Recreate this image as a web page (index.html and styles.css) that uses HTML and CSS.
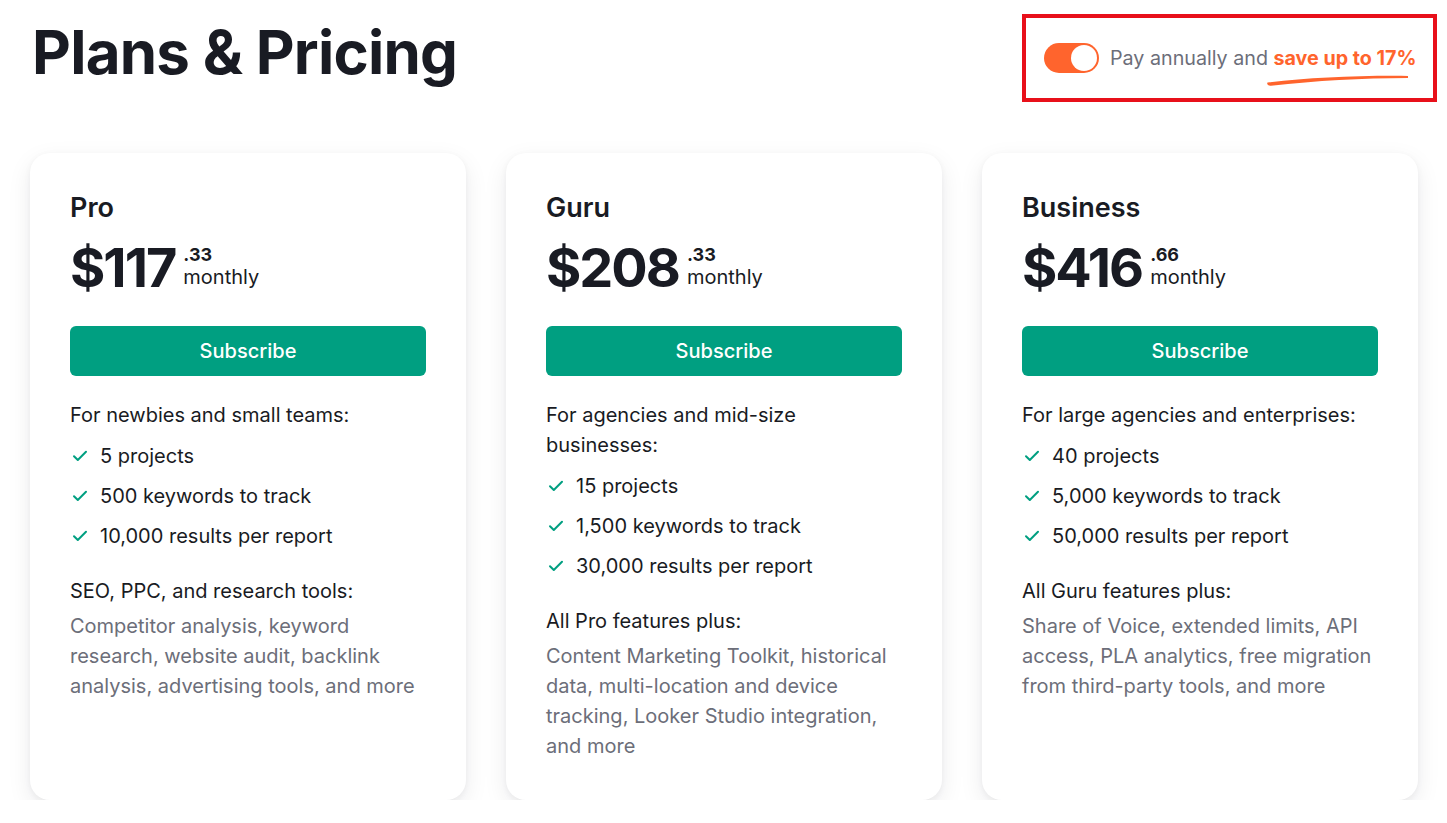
FILE: index.html
```html
<!DOCTYPE html>
<html lang="en">
<head>
<meta charset="utf-8">
<title>Plans &amp; Pricing</title>
<link rel="stylesheet" href="styles.css">
</head>
<body>
<header class="header">
  <h1 class="title">Plans &amp; Pricing</h1>
  <div class="billing">
    <span class="toggle"><span class="knob"></span></span>
    <span class="billing-text">Pay annually and <span class="save">save up to 17%<svg class="swoosh" viewBox="0 0 142 12" preserveAspectRatio="none" aria-hidden="true"><path d="M0.5 8.2 C 40 3.2, 90 0.4, 142 1 L 142 3.4 C 95 3.6, 50 6.4, 4 11.7 C 1 12, -0.5 10, 0.5 8.2 Z" fill="#ff642d"/></svg></span></span>
  </div>
</header>

<main class="plans">
  <section class="card">
    <h2 class="plan-name">Pro</h2>
    <div class="price"><span class="amount">$117</span><span class="price-side"><span class="cents">.33</span><span class="period">monthly</span></span></div>
    <button class="subscribe">Subscribe</button>
    <p class="intro">For newbies and small teams:</p>
    <ul class="limits">
      <li><svg class="check" viewBox="0 0 16 16"><path d="M2 8.2 L5.8 12 L14 3.8"/></svg>5 projects</li>
      <li><svg class="check" viewBox="0 0 16 16"><path d="M2 8.2 L5.8 12 L14 3.8"/></svg>500 keywords to track</li>
      <li><svg class="check" viewBox="0 0 16 16"><path d="M2 8.2 L5.8 12 L14 3.8"/></svg>10,000 results per report</li>
    </ul>
    <p class="feat-head">SEO, PPC, and research tools:</p>
    <p class="feat-desc">Competitor analysis, keyword research, website audit, backlink analysis, advertising tools, and more</p>
  </section>

  <section class="card">
    <h2 class="plan-name">Guru</h2>
    <div class="price"><span class="amount">$208</span><span class="price-side"><span class="cents">.33</span><span class="period">monthly</span></span></div>
    <button class="subscribe">Subscribe</button>
    <p class="intro">For agencies and mid-size businesses:</p>
    <ul class="limits">
      <li><svg class="check" viewBox="0 0 16 16"><path d="M2 8.2 L5.8 12 L14 3.8"/></svg>15 projects</li>
      <li><svg class="check" viewBox="0 0 16 16"><path d="M2 8.2 L5.8 12 L14 3.8"/></svg>1,500 keywords to track</li>
      <li><svg class="check" viewBox="0 0 16 16"><path d="M2 8.2 L5.8 12 L14 3.8"/></svg>30,000 results per report</li>
    </ul>
    <p class="feat-head">All Pro features plus:</p>
    <p class="feat-desc">Content Marketing Toolkit, historical data, multi-location and device tracking, Looker Studio integration, and more</p>
  </section>

  <section class="card">
    <h2 class="plan-name">Business</h2>
    <div class="price"><span class="amount">$416</span><span class="price-side"><span class="cents">.66</span><span class="period">monthly</span></span></div>
    <button class="subscribe">Subscribe</button>
    <p class="intro">For large agencies and enterprises:</p>
    <ul class="limits">
      <li><svg class="check" viewBox="0 0 16 16"><path d="M2 8.2 L5.8 12 L14 3.8"/></svg>40 projects</li>
      <li><svg class="check" viewBox="0 0 16 16"><path d="M2 8.2 L5.8 12 L14 3.8"/></svg>5,000 keywords to track</li>
      <li><svg class="check" viewBox="0 0 16 16"><path d="M2 8.2 L5.8 12 L14 3.8"/></svg>50,000 results per report</li>
    </ul>
    <p class="feat-head">All Guru features plus:</p>
    <p class="feat-desc">Share of Voice, extended limits, API access, PLA analytics, free migration from third-party tools, and more</p>
  </section>
</main>
</body>
</html>
```

FILE: styles.css
```css
* { box-sizing: border-box; }

html, body {
  margin: 0;
  padding: 0;
  background: #ffffff;
}

body {
  font-family: Inter, "Noto Sans", "Liberation Sans", sans-serif;
  color: #191b23;
}

.header {
  display: flex;
  justify-content: space-between;
  align-items: flex-start;
  padding: 14px 10px 0 34px;
}

.title {
  margin: 8px 0 0 -2px;
  font-size: 60px;
  line-height: 60px;
  font-weight: 700;
  letter-spacing: -0.75px;
  color: #191b23;
}

.billing {
  display: flex;
  align-items: center;
  gap: 11px;
  width: 415px;
  height: 88px;
  padding: 0 0 0 18px;
  border: 4px solid #e8101a;
}

.toggle {
  display: flex;
  justify-content: flex-end;
  align-items: center;
  width: 55px;
  height: 30px;
  padding: 2px;
  border-radius: 15px;
  background: #ff642d;
  flex: none;
}

.knob {
  width: 26px;
  height: 26px;
  border-radius: 50%;
  background: #ffffff;
}

.billing-text {
  font-size: 19.7px;
  line-height: 24px;
  color: #6c6e79;
  white-space: nowrap;
}

.save {
  position: relative;
  font-weight: 700;
  color: #ff642d;
}

.swoosh {
  position: absolute;
  left: -6px;
  top: 29px;
  width: 141px;
  height: 11px;
}

.plans {
  display: grid;
  grid-template-columns: repeat(3, 436px);
  gap: 40px;
  padding: 51px 30px 0 30px;
}

.card {
  background: #ffffff;
  border-radius: 20px;
  padding: 39px 40px 39px 40px;
  box-shadow: 0 2px 6px rgba(25, 27, 35, 0.05), 0 8px 24px rgba(25, 27, 35, 0.08);
}

.plan-name {
  margin: 0;
  font-size: 27px;
  line-height: 32px;
  font-weight: 600;
}

.price {
  display: flex;
  align-items: flex-start;
  gap: 8px;
  margin-top: 16px;
  height: 56px;
}

.amount {
  font-size: 54px;
  line-height: 56px;
  font-weight: 700;
  letter-spacing: -2px;
}

.price-side {
  display: flex;
  flex-direction: column;
  margin-top: 6px;
}

.cents {
  font-size: 18px;
  line-height: 18px;
  font-weight: 700;
}

.period {
  margin-top: 2px;
  font-size: 20px;
  line-height: 22px;
  font-weight: 400;
}

.subscribe {
  display: block;
  width: 100%;
  height: 50px;
  margin-top: 30px;
  border: none;
  border-radius: 6px;
  background: #009f81;
  color: #ffffff;
  font-family: inherit;
  font-size: 20px;
  font-weight: 500;
  cursor: pointer;
}

.intro {
  margin: 24px 0 0;
  font-size: 20px;
  line-height: 30px;
}

.limits {
  list-style: none;
  margin: 11px 0 0;
  padding: 0;
  display: flex;
  flex-direction: column;
  gap: 10px;
}

.limits li {
  display: flex;
  align-items: center;
  gap: 12px;
  font-size: 20px;
  line-height: 30px;
}

.check {
  width: 16px;
  height: 16px;
  margin-left: 2px;
  flex: none;
  fill: none;
  stroke: #009f81;
  stroke-width: 2;
  stroke-linecap: round;
  stroke-linejoin: round;
}

.feat-head {
  margin: 25px 0 0;
  font-size: 20px;
  line-height: 30px;
}

.feat-desc {
  margin: 5px 0 0;
  font-size: 20px;
  line-height: 30px;
  color: #6c6e79;
}
```
